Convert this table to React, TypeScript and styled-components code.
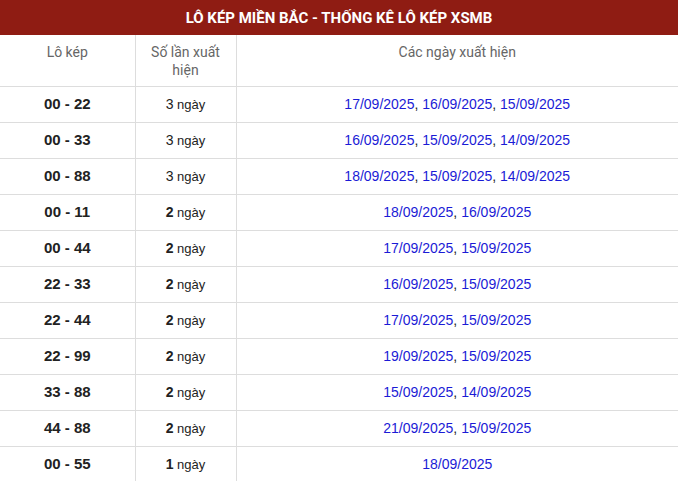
import React from 'react';
import styled, { createGlobalStyle } from 'styled-components';

const GlobalStyle = createGlobalStyle`
    body {
        margin: 0;
        background: #fff;
        font-family: 'Liberation Sans', Arial, sans-serif;
    }
`;

const Table = styled.table`
    width: 678px;
    border-collapse: collapse;
    table-layout: fixed;
`;

const Title = styled.th`
    height: 35px;
    padding: 0;
    background-color: #8f1c13;
    color: #fff;
    font-family: Roboto, 'Liberation Sans', sans-serif;
    font-weight: 700;
    font-size: 15px;
    text-align: center;
    vertical-align: middle;
`;

const HeadCell = styled.th`
    height: 51px;
    padding: 8px 10px 0;
    box-sizing: border-box;
    border-right: 1px solid #ddd;
    border-bottom: 1px solid #ddd;
    color: #666;
    font-family: Roboto, 'Liberation Sans', sans-serif;
    font-weight: 400;
    font-size: 14px;
    line-height: 18px;
    text-align: center;
    vertical-align: top;
    &:last-child {
        border-right: none;
    }
`;

const Cell = styled.td`
    height: 36px;
    padding: 0 6px;
    box-sizing: border-box;
    border-right: 1px solid #ddd;
    border-bottom: 1px solid #ddd;
    color: #222;
    text-align: center;
    vertical-align: middle;
    &:last-child {
        border-right: none;
    }
`;

const Pair = styled.span`
    font-weight: 700;
    font-size: 15px;
`;

const Count = styled.span<{ $bold: boolean }>`
    font-size: 13px;
    b {
        font-weight: ${(p) => (p.$bold ? 700 : 400)};
        font-size: 14px;
    }
`;

const Date = styled.span`
    color: #1b1bd6;
    font-size: 14px;
`;

const Dates = styled.span`
    font-size: 14px;
    color: #222;
`;

const rows: [string, number, string[]][] = [
    ['00 - 22', 3, ['17/09/2025', '16/09/2025', '15/09/2025']],
    ['00 - 33', 3, ['16/09/2025', '15/09/2025', '14/09/2025']],
    ['00 - 88', 3, ['18/09/2025', '15/09/2025', '14/09/2025']],
    ['00 - 11', 2, ['18/09/2025', '16/09/2025']],
    ['00 - 44', 2, ['17/09/2025', '15/09/2025']],
    ['22 - 33', 2, ['16/09/2025', '15/09/2025']],
    ['22 - 44', 2, ['17/09/2025', '15/09/2025']],
    ['22 - 99', 2, ['19/09/2025', '15/09/2025']],
    ['33 - 88', 2, ['15/09/2025', '14/09/2025']],
    ['44 - 88', 2, ['21/09/2025', '15/09/2025']],
    ['00 - 55', 1, ['18/09/2025']],
];

export default function App() {
    return (
        <>
            <GlobalStyle />
            <Table>
                <colgroup>
                    <col style={{ width: 135 }} />
                    <col style={{ width: 101 }} />
                    <col />
                </colgroup>
                <thead>
                    <tr>
                        <Title colSpan={3}>
                            LÔ KÉP MIỀN BẮC - THỐNG KÊ LÔ KÉP XSMB
                        </Title>
                    </tr>
                    <tr>
                        <HeadCell>Lô kép</HeadCell>
                        <HeadCell>Số lần xuất hiện</HeadCell>
                        <HeadCell>Các ngày xuất hiện</HeadCell>
                    </tr>
                </thead>
                <tbody>
                    {rows.map(([pair, count, dates]) => (
                        <tr key={pair}>
                            <Cell>
                                <Pair>{pair}</Pair>
                            </Cell>
                            <Cell>
                                <Count $bold={count < 3}>
                                    <b>{count}</b> ngày
                                </Count>
                            </Cell>
                            <Cell>
                                <Dates>
                                    {dates.map((d, i) => (
                                        <React.Fragment key={d}>
                                            {i > 0 && ', '}
                                            <Date>{d}</Date>
                                        </React.Fragment>
                                    ))}
                                </Dates>
                            </Cell>
                        </tr>
                    ))}
                </tbody>
            </Table>
        </>
    );
}
